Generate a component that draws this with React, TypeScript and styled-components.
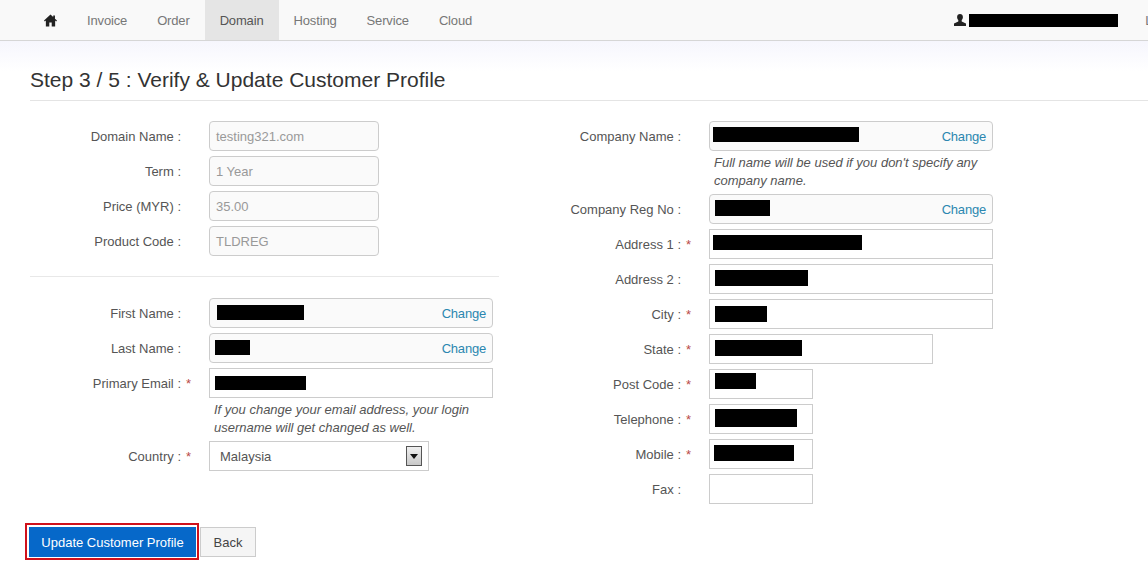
import React from 'react';
import styled, { createGlobalStyle } from 'styled-components';

const NAV_ITEMS = ['Invoice', 'Order', 'Domain', 'Hosting', 'Service', 'Cloud'];

type Bar = { x: number; top: number; w: number; h: number };
type FieldRow = {
  label: string;
  required?: boolean;
  width: number;
  value?: string;
  locked?: boolean;
  change?: boolean;
  bar?: Bar;
  help?: string[];
  select?: boolean;
};

const PRODUCT: FieldRow[] = [
  { label: 'Domain Name', width: 170, value: 'testing321.com', locked: true },
  { label: 'Term', width: 170, value: '1 Year', locked: true },
  { label: 'Price (MYR)', width: 170, value: '35.00', locked: true },
  { label: 'Product Code', width: 170, value: 'TLDREG', locked: true },
];

const PERSON: FieldRow[] = [
  { label: 'First Name', width: 284, locked: true, change: true, bar: { x: 7, top: 6, w: 87, h: 15 } },
  { label: 'Last Name', width: 284, locked: true, change: true, bar: { x: 5, top: 6, w: 35, h: 15 } },
  {
    label: 'Primary Email',
    required: true,
    width: 284,
    bar: { x: 5, top: 7, w: 91, h: 14 },
    help: ['If you change your email address, your login', 'username will get changed as well.'],
  },
  { label: 'Country', required: true, width: 220, value: 'Malaysia', select: true },
];

const COMPANY: FieldRow[] = [
  {
    label: 'Company Name',
    width: 284,
    locked: true,
    change: true,
    bar: { x: 3, top: 5, w: 146, h: 15 },
    help: ["Full name will be used if you don't specify any", 'company name.'],
  },
  { label: 'Company Reg No', width: 284, locked: true, change: true, bar: { x: 5, top: 5, w: 55, h: 16 } },
  { label: 'Address 1', required: true, width: 284, bar: { x: 3, top: 5, w: 149, h: 15 } },
  { label: 'Address 2', width: 284, bar: { x: 5, top: 5, w: 93, h: 16 } },
  { label: 'City', required: true, width: 284, bar: { x: 5, top: 6, w: 52, h: 16 } },
  { label: 'State', required: true, width: 224, bar: { x: 5, top: 5, w: 87, h: 16 } },
  { label: 'Post Code', required: true, width: 104, bar: { x: 5, top: 3, w: 41, h: 16 } },
  { label: 'Telephone', required: true, width: 104, bar: { x: 5, top: 4, w: 82, h: 18 } },
  { label: 'Mobile', required: true, width: 104, bar: { x: 4, top: 5, w: 80, h: 16 } },
  { label: 'Fax', width: 104 },
];

function Row({ row }: { row: FieldRow }) {
  return (
    <>
      <RowLine>
        <Label>{row.label} :</Label>
        <Star>{row.required ? '*' : ''}</Star>
        {row.select ? (
          <SelectBox $width={row.width}>
            {row.value}
            <SelectArrow>
              <svg width="8" height="5" viewBox="0 0 8 5">
                <path d="M0 0h8L4 5z" fill="#111" />
              </svg>
            </SelectArrow>
          </SelectBox>
        ) : (
          <Field $width={row.width} $locked={row.locked}>
            {row.value && <FieldValue>{row.value}</FieldValue>}
            {row.bar && <Redacted $x={row.bar.x} $top={row.bar.top} $w={row.bar.w} $h={row.bar.h} />}
            {row.change && <ChangeLink href="#">Change</ChangeLink>}
          </Field>
        )}
      </RowLine>
      {row.help && (
        <Help>
          {row.help.map((line) => (
            <div key={line}>{line}</div>
          ))}
        </Help>
      )}
    </>
  );
}

export default function App() {
  return (
    <>
      <GlobalStyle />
      <Navbar>
        <NavItem href="#">
          <svg width="13" height="13" viewBox="0 0 14 13">
            <path d="M7 0 0 6.6l.9 1L2 6.6V13h3.7V8.6h2.6V13H12V6.6l1.1 1 .9-1-2.2-2.1V1h-1.9v1.7z" fill="#222" />
          </svg>
        </NavItem>
        {NAV_ITEMS.map((item) => (
          <NavItem href="#" key={item} $active={item === 'Domain'}>
            {item}
          </NavItem>
        ))}
        <UserArea>
          <svg width="12" height="12" viewBox="0 0 12 12">
            <path d="M6 0c1.8 0 2.9 1.3 2.9 3.1 0 1.200-.5 2.300-1.200 3v1.300L12 9.500V12H0V9.500l4.300-2.100V6.100c-.7-.7-1.200-1.800-1.200-3C3.100 1.300 4.200 0 6 0z" fill="#222" />
          </svg>
          <UserName />
          <Logout href="#">Logout</Logout>
        </UserArea>
      </Navbar>
      <Main>
        <Heading>Step 3 / 5 : Verify &amp; Update Customer Profile</Heading>
        <Columns>
          <Column>
            {PRODUCT.map((row) => (
              <Row row={row} key={row.label} />
            ))}
            <Divider />
            {PERSON.map((row) => (
              <Row row={row} key={row.label} />
            ))}
          </Column>
          <Column>
            {COMPANY.map((row) => (
              <Row row={row} key={row.label} />
            ))}
          </Column>
        </Columns>
        <Actions>
          <Highlight>
            <PrimaryButton type="button">Update Customer Profile</PrimaryButton>
          </Highlight>
          <BackButton type="button">Back</BackButton>
        </Actions>
      </Main>
    </>
  );
}

const GlobalStyle = createGlobalStyle`
  html, body {
    margin: 0;
    background: #fff;
    overflow: hidden;
  }
  body {
    font-family: "Liberation Sans", Arial, sans-serif;
    font-size: 13px;
    color: #555;
  }
`;

const Navbar = styled.nav`
  display: flex;
  height: 40px;
  padding-left: 29px;
  background: #f9f9f9;
  border-bottom: 1px solid #d6d6d6;
  overflow: hidden;
`;

const NavItem = styled.a<{ $active?: boolean }>`
  display: flex;
  align-items: center;
  padding: 1px 15px 0;
  letter-spacing: -0.15px;
  color: ${(p) => (p.$active ? '#555' : '#777')};
  background: ${(p) => (p.$active ? '#e5e5e5' : 'transparent')};
  text-decoration: none;
`;

const UserArea = styled.div`
  display: flex;
  flex-shrink: 0;
  align-items: center;
  margin: 0 -37px 0 auto;
`;

const UserName = styled.span`
  width: 149px;
  height: 13px;
  margin-left: 3px;
  background: #000;
`;

const Logout = styled.a`
  margin-left: 27px;
  color: #777;
  text-decoration: none;
`;

const Main = styled.main`
  padding-left: 30px;
  background: linear-gradient(#f6f6fd, #fff) no-repeat;
  background-size: 100% 30px;
`;

const Heading = styled.h1`
  margin: 0;
  padding: 28px 0 9px;
  font-size: 21px;
  font-weight: 400;
  line-height: 22px;
  color: #333;
  border-bottom: 1px solid #e4e4e4;
`;

const Columns = styled.div`
  display: grid;
  grid-template-columns: 469px 1fr;
  column-gap: 31px;
  padding-top: 20px;
`;

const Column = styled.div`
  display: flex;
  flex-direction: column;
`;

const RowLine = styled.div`
  display: flex;
  height: 30px;
  margin-bottom: 5px;
`;

const Label = styled.label`
  width: 151px;
  line-height: 32px;
  text-align: right;
  white-space: nowrap;
`;

const Star = styled.span`
  width: 28px;
  padding-left: 5px;
  box-sizing: border-box;
  line-height: 32px;
  color: #b94a48;
`;

const Field = styled.div<{ $width: number; $locked?: boolean }>`
  position: relative;
  display: flex;
  align-items: flex-start;
  box-sizing: border-box;
  width: ${(p) => p.$width}px;
  height: 30px;
  background: ${(p) => (p.$locked ? '#fafafa' : '#fff')};
  border: 1px solid #ccc;
  border-radius: ${(p) => (p.$locked ? '4px' : '0')};
`;

const FieldValue = styled.span`
  padding-left: 6px;
  line-height: 30px;
  color: #999;
`;

const Redacted = styled.span<{ $x: number; $top: number; $w: number; $h: number }>`
  width: ${(p) => p.$w}px;
  height: ${(p) => p.$h}px;
  margin: ${(p) => p.$top}px 0 0 ${(p) => p.$x}px;
  background: #000;
`;

const ChangeLink = styled.a`
  margin-left: auto;
  padding-right: 6px;
  letter-spacing: -0.2px;
  line-height: 30px;
  color: #2b87b0;
  text-decoration: none;
`;

const SelectBox = styled.div<{ $width: number }>`
  display: flex;
  align-items: center;
  justify-content: space-between;
  box-sizing: border-box;
  width: ${(p) => p.$width}px;
  height: 30px;
  padding: 0 6px 0 10px;
  background: #fff;
  border: 1px solid #ccc;
`;

const SelectArrow = styled.span`
  display: flex;
  align-items: center;
  justify-content: center;
  box-sizing: border-box;
  width: 16px;
  height: 20px;
  background: linear-gradient(#f0f0f0, #c8c8c8);
  border: 1px solid #555;
`;

const Help = styled.div`
  margin: -2px 0 4px 184px;
  font-style: italic;
  line-height: 18px;
  white-space: nowrap;
`;

const Divider = styled.hr`
  width: 100%;
  height: 1px;
  margin: 15px 0 21px;
  background: #e8e8e8;
  border: 0;
`;

const Actions = styled.div`
  display: flex;
  align-items: flex-start;
  margin: 14px 0 0 -5px;
`;

const Highlight = styled.div`
  display: flex;
  padding: 2px 1px 1px 2px;
  border: 2px solid #d0111b;
`;

const PrimaryButton = styled.button`
  width: 167px;
  height: 30px;
  padding: 0;
  font: 13px "Liberation Sans", Arial, sans-serif;
  color: #fff;
  background: #0668c9;
  border: 0;
`;

const BackButton = styled.button`
  width: 56px;
  height: 30px;
  margin: 4px 0 0 1px;
  padding: 0;
  font: 13px "Liberation Sans", Arial, sans-serif;
  color: #444;
  background: #f5f5f5;
  border: 1px solid #ccc;
`;
